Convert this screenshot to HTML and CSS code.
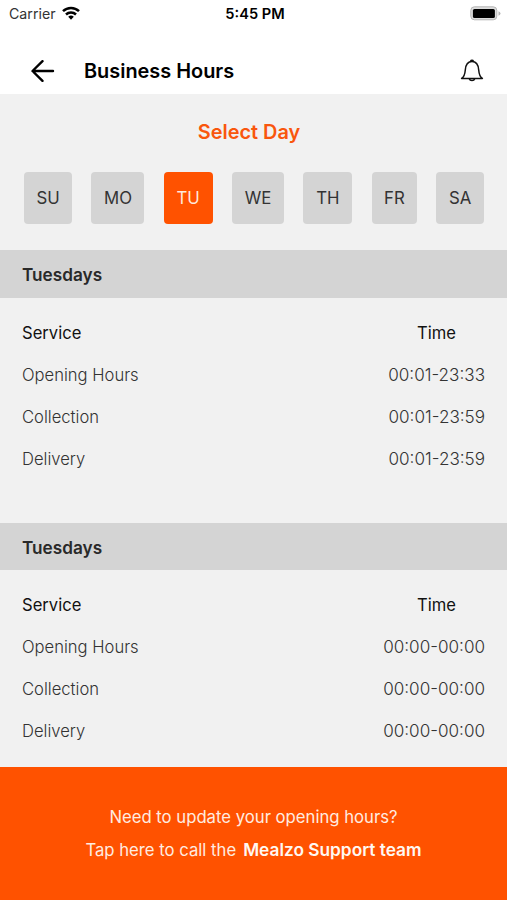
FILE: index.html
```html
<!DOCTYPE html>
<html lang="en">

<head>
  <meta charset="UTF-8">
  <meta name="viewport" content="width=device-width, initial-scale=1.0">
  <title>Business Hours</title>
  <link rel="stylesheet" href="styles.css">
</head>

<body>
  <div class="status-bar">
    <div class="carrier">
      <span class="carrier-name">Carrier</span>
      <svg class="wifi" width="18" height="14" viewBox="0 0 18 14" fill="none" stroke="#000" stroke-width="2.5">
        <path d="M1 5.2a11.5 11.5 0 0 1 16 0" />
        <path d="M4 8.5a7.2 7.2 0 0 1 10 0" />
        <path d="M9 13.8l-2.8-3a4 4 0 0 1 5.6 0z" fill="#000" stroke="none" />
      </svg>
    </div>
    <span class="clock">5:45 PM</span>
    <svg class="battery" width="31" height="15" viewBox="0 0 31 15">
      <rect x=".8" y=".8" width="26" height="13" rx="3.6" fill="#ddd" stroke="#b5b5b5" />
      <rect x="2.9" y="3" width="22" height="9" rx="1.6" fill="#000" />
      <path d="M28.5 5.2q2 .7 2 2.3t-2 2.3z" fill="#b5b5b5" />
    </svg>
  </div>

  <header class="header">
    <svg class="back" width="24" height="22" viewBox="0 0 24 22" fill="none" stroke="#000" stroke-width="2.4" stroke-linecap="round" stroke-linejoin="round">
      <path d="M11.5 1.2L1.5 11l10 9.8M1.8 11h20.2" />
    </svg>
    <h1 class="title">Business Hours</h1>
    <svg class="bell" width="24" height="24" viewBox="0 0 24 24" fill="none" stroke="#111" stroke-width="1.5" stroke-linejoin="round">
      <path d="M1.6 19.5c2.8-1.6 3.3-4 3.7-8.5C5.7 6 7.8 2.6 12 2.6s6.3 3.4 6.7 8.4c.4 4.5.9 6.9 3.7 8.5z" />
      <path d="M10.6 2.3a1.5 1.5 0 0 1 2.8 0M9.3 19.7a2.8 2.5 0 0 0 5.4 0" />
    </svg>
  </header>

  <main class="content">
    <h2 class="select-title">Select Day</h2>
    <div class="days">
      <button class="day">SU</button>
      <button class="day">MO</button>
      <button class="day active">TU</button>
      <button class="day">WE</button>
      <button class="day">TH</button>
      <button class="day">FR</button>
      <button class="day">SA</button>
    </div>

    <section class="hours">
      <h3 class="hours-day">Tuesdays</h3>
      <div class="hours-list">
        <div class="row row-head"><span>Service</span><span>Time</span></div>
        <div class="row"><span>Opening Hours</span><span class="time">00:01-23:33</span></div>
        <div class="row"><span>Collection</span><span class="time">00:01-23:59</span></div>
        <div class="row"><span>Delivery</span><span class="time">00:01-23:59</span></div>
      </div>
    </section>

    <section class="hours">
      <h3 class="hours-day">Tuesdays</h3>
      <div class="hours-list">
        <div class="row row-head"><span>Service</span><span>Time</span></div>
        <div class="row"><span>Opening Hours</span><span class="time">00:00-00:00</span></div>
        <div class="row"><span>Collection</span><span class="time">00:00-00:00</span></div>
        <div class="row"><span>Delivery</span><span class="time">00:00-00:00</span></div>
      </div>
    </section>
  </main>

  <footer class="support">
    <p class="support-question">Need to update your opening hours?</p>
    <p class="support-call"><span>Tap here to call the</span><strong>Mealzo Support team</strong></p>
  </footer>
</body>

</html>
```
FILE: styles.css
```css
* {
  margin: 0;
  padding: 0;
  box-sizing: border-box;
}

body {
  display: flex;
  flex-direction: column;
  height: 900px;
  overflow: hidden;
  font-family: Inter, 'Liberation Sans', sans-serif;
  font-size: 16.6px;
  background-color: #f1f1f1;
  color: #111;
}

.status-bar {
  display: grid;
  grid-template-columns: 1fr auto 1fr;
  align-items: center;
  flex-shrink: 0;
  height: 28px;
  padding: 0 6px 0 9px;
  background-color: #fff;
  font-size: 14.2px;
}

.carrier {
  display: flex;
  align-items: center;
  gap: 6px;
  margin-bottom: 2px;
  color: #333;
}

.wifi {
  margin-bottom: 1px;
}

.clock {
  font-weight: 600;
  font-size: 14.6px;
  color: #000;
}

.battery {
  justify-self: end;
  margin-bottom: 2px;
}

.header {
  display: flex;
  align-items: center;
  flex-shrink: 0;
  height: 66px;
  padding: 19px 23px 0 31px;
  background-color: #fff;
}

.title {
  flex: 1;
  margin-left: 29px;
  font-size: 19.9px;
  font-weight: 600;
  color: #000;
}

.content {
  flex: 1;
  min-height: 0;
  overflow: hidden;
}

.select-title {
  padding: 26px 9px 0 0;
  line-height: 24px;
  text-align: center;
  font-size: 19.9px;
  font-weight: 600;
  color: #f9560d;
}

.days {
  display: grid;
  grid-template-columns: 48.3px 53px 49px 52.4px 49px 45.7px 47.6px;
  justify-content: space-between;
  padding: 28px 23px 26px 24px;
}

.day {
  height: 52px;
  border: none;
  border-radius: 4px;
  background-color: #d4d4d4;
  color: #333;
  font-family: inherit;
  font-size: 16.8px;
  cursor: pointer;
}

.day.active {
  background-color: #ff5200;
  color: #ffe9dc;
}

.hours-day {
  height: 47.6px;
  padding: 0 22px;
  line-height: 49px;
  background-color: #d4d4d4;
  color: #292929;
  font-size: 17.2px;
  font-weight: 600;
}

.hours-list {
  padding: 14px 22px;
}

.hours + .hours {
  margin-top: 29px;
}

.row {
  display: flex;
  justify-content: space-between;
  line-height: 42px;
  font-weight: 300;
  color: #333;
}

.row-head {
  padding-right: 29px;
  font-weight: 400;
  color: #111;
}

.time {
  font-size: 17.1px;
}

.support {
  flex-shrink: 0;
  height: 133px;
  padding-top: 34px;
  background-color: #ff5200;
  color: #ffece0;
  text-align: center;
  font-size: 16.7px;
  line-height: 33px;
}

.support-call {
  display: flex;
  justify-content: center;
  align-items: baseline;
  gap: 7px;
  line-height: 31px;
}

.support-call strong {
  font-size: 17.3px;
  font-weight: 600;
  color: #fff8f2;
}
```
